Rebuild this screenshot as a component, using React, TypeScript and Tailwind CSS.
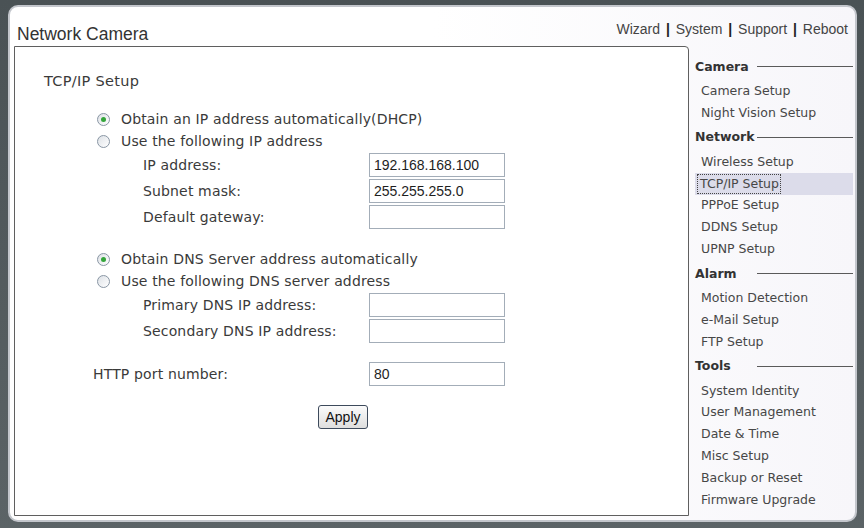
import type { ReactNode } from 'react'

const FORM_FONT = "font-['DejaVu_Sans',Verdana,sans-serif]"
const ARIAL = "font-['Liberation_Sans',Arial,sans-serif]"

const MENU: { title: string; items: string[] }[] = [
  { title: 'Camera', items: ['Camera Setup', 'Night Vision Setup'] },
  { title: 'Network', items: ['Wireless Setup', 'TCP/IP Setup', 'PPPoE Setup', 'DDNS Setup', 'UPNP Setup'] },
  { title: 'Alarm', items: ['Motion Detection', 'e-Mail Setup', 'FTP Setup'] },
  { title: 'Tools', items: ['System Identity', 'User Management', 'Date & Time', 'Misc Setup', 'Backup or Reset', 'Firmware Upgrade'] },
]

const ACTIVE = 'TCP/IP Setup'

function Radio({ checked }: { checked?: boolean }) {
  return (
    <span className="flex h-[13px] w-[13px] shrink-0 items-center justify-center rounded-full border border-[#8996a4] bg-gradient-to-br from-[#dde1e6] to-white">
      {checked && <span className="h-[5px] w-[5px] rounded-full bg-[#33a53a]" />}
    </span>
  )
}

function RadioRow({ checked, children }: { checked?: boolean; children: ReactNode }) {
  return (
    <div className="flex h-[21.5px] items-center gap-[11px] pl-[4px]">
      <Radio checked={checked} />
      <span>{children}</span>
    </div>
  )
}

function Field({ label, value = '', indent = true }: { label: string; value?: string; indent?: boolean }) {
  return (
    <div className={`flex h-[26px] items-center ${indent ? 'pl-[50px]' : ''}`}>
      <span className={indent ? 'w-[226px]' : 'w-[276px]'}>{label}</span>
      <input
        readOnly
        value={value}
        className={`h-[24px] w-[136px] border border-[#a3adb8] bg-white pl-[4px] text-[14px] tracking-normal text-[#1e1e1e] outline-none ${ARIAL}`}
      />
    </div>
  )
}

function Sidebar() {
  return (
    <nav className={`flex w-[164px] shrink-0 flex-col pt-[7.4px] ${FORM_FONT} text-[12.5px]`}>
      {MENU.map((section) => (
        <div key={section.title}>
          <div className="flex h-[27.2px] items-center pl-[6px]">
            <span className="min-w-[60px] font-bold text-[#333]">{section.title}</span>
            <span className="ml-[2px] h-px flex-1 bg-[#5a5a5a]" />
          </div>
          {section.items.map((item) => (
            <div
              key={item}
              className={`ml-[6px] flex h-[21.8px] items-center pl-[6px] text-[#474747] ${item === ACTIVE ? 'bg-[#dcdcea]' : ''}`}
            >
              {item === ACTIVE ? (
                <span className="-ml-[3px] pl-[2px] pr-[1px] outline outline-1 outline-dotted outline-[#444]">{item}</span>
              ) : (
                item
              )}
            </div>
          ))}
        </div>
      ))}
    </nav>
  )
}

export default function App() {
  return (
    <div className="h-[528px] w-[864px] bg-gradient-to-b from-[#4a5255] to-[#5b6366] pt-[5px] pr-[7px] pb-[6px] pl-[8px]">
      <div className="flex h-full flex-col rounded-[10px] border-2 border-[#c3c6cc] bg-gradient-to-r from-white via-white to-[#f7f6fa] pr-[2px] pb-[4px] pl-[4px]">
        <header className="flex h-[39px] justify-between">
          <h1 className={`pt-[17px] pl-[3px] text-[17.5px] leading-[20px] text-[#333] ${ARIAL}`}>Network Camera</h1>
          <div className={`pt-[13px] pr-[5px] text-[14px] leading-[18px] text-[#444] ${ARIAL}`}>
            Wizard <b className="px-[2px] text-[#222]">|</b> System <b className="px-[2px] text-[#222]">|</b> Support{' '}
            <b className="px-[2px] text-[#222]">|</b> Reboot
          </div>
        </header>

        <div className="flex flex-1">
          <main className={`w-[675px] shrink-0 rounded-tr-[4px] border border-[#5f5f5f] bg-white ${FORM_FONT} text-[14px] tracking-[0.15px] text-[#3a3a3a]`}>
            <h2 className="mt-[24px] ml-[29px] text-[14.5px] leading-[20px] tracking-[0.3px]">TCP/IP Setup</h2>

            <div className="mt-[18px] flex flex-col pl-[78px]">
              <RadioRow checked>Obtain an IP address automatically(DHCP)</RadioRow>
              <RadioRow>Use the following IP address</RadioRow>
              <Field label="IP address:" value="192.168.168.100" />
              <Field label="Subnet mask:" value="255.255.255.0" />
              <Field label="Default gateway:" />

              <div className="h-[19px]" />
              <RadioRow checked>Obtain DNS Server address automatically</RadioRow>
              <RadioRow>Use the following DNS server address</RadioRow>
              <Field label="Primary DNS IP address:" />
              <Field label="Secondary DNS IP address:" />

              <div className="h-[17px]" />
              <Field label="HTTP port number:" value="80" indent={false} />

              <button
                className={`mt-[18px] ml-[225px] h-[24px] w-[50px] rounded-[3px] border border-[#3d4a5c] bg-gradient-to-b from-[#fbfbfb] to-[#dedede] text-[14px] tracking-normal text-[#111] ${ARIAL}`}
              >
                Apply
              </button>
            </div>
          </main>

          <Sidebar />
        </div>
      </div>
    </div>
  )
}
